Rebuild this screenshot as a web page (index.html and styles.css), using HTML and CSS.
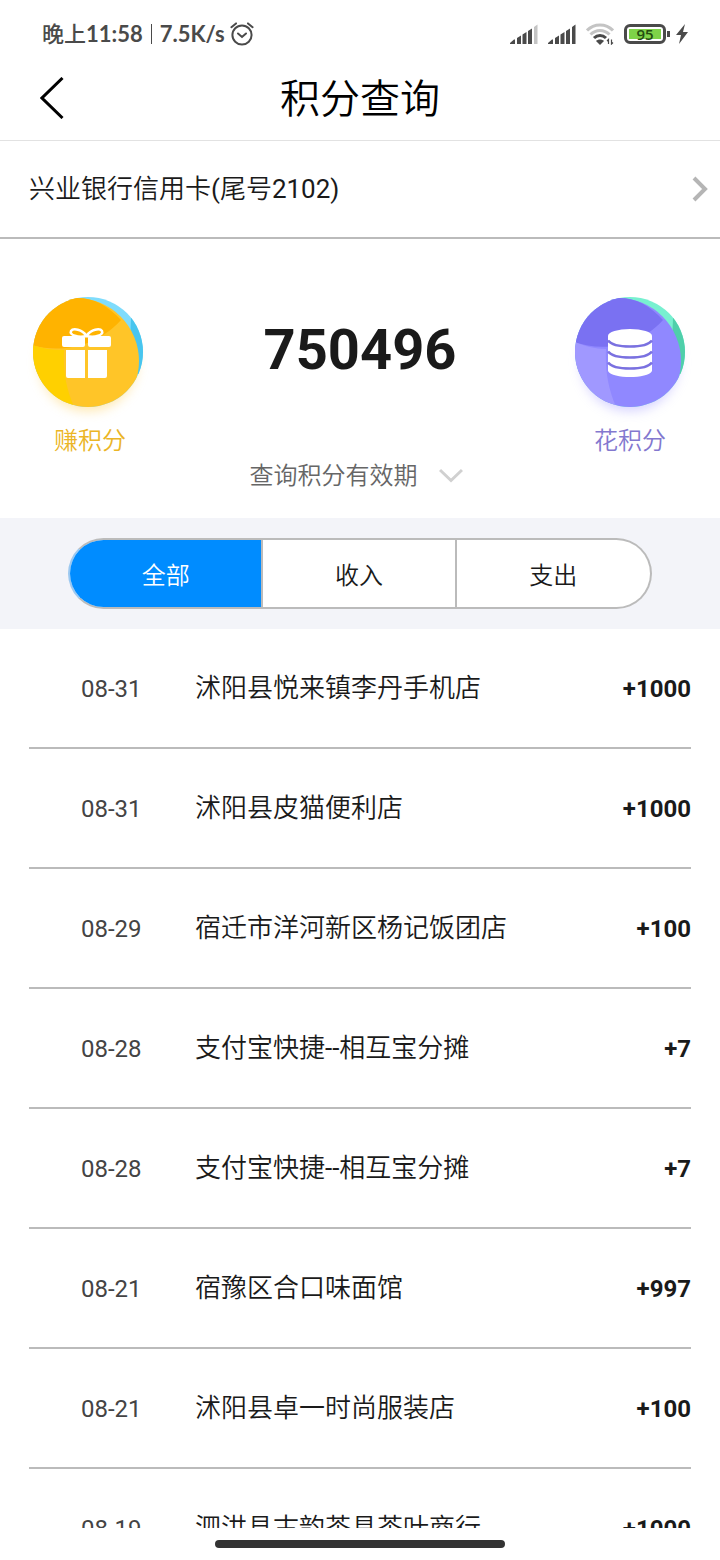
FILE: index.html
```html
<!DOCTYPE html>
<html lang="zh-CN">
<head>
	<meta charset="utf-8">
	<meta name="viewport" content="width=device-width, initial-scale=1">
	<title>积分查询</title>
	<link rel="stylesheet" href="styles.css">
</head>
<body>
	<div class="status">
		<span class="time"><span class="period">晚上</span>11:58</span>
		<span class="sep"></span>
		<span class="speed">7.5K/s</span>
		<svg class="alarm" width="24" height="24" viewBox="0 0 24 24" fill="none" stroke="#4a4a4a" stroke-width="2" stroke-linecap="round">
			<circle cx="12" cy="13" r="9.6"/>
			<path d="M8 11.5l4 3.500 4-3.500M1.400 5.200L6 1.400M22.600 5.200L18 1.400"/>
		</svg>
		<div class="status-icons">
			<svg width="28" height="20" viewBox="0 0 28 20" fill="#4a4a4a">
				<path d="M0 20v-1l4-3.500h1V20zM7 14l4-2.500V20H7zM12.500 10.500l4-2.500v12h-4zM18 7l4-2.500V20h-4z"/>
				<path d="M24 3l3.500-2.500V20H24z" fill="#c4c4c4"/>
			</svg>
			<svg width="28" height="20" viewBox="0 0 28 20" fill="#4a4a4a">
				<path d="M0 20v-1l4-3.500h1V20zM7 14l4-2.500V20H7zM12.500 10.500l4-2.500v12h-4zM18 7l4-2.500V20h-4zM24 3l3.500-2.500V20H24z"/>
			</svg>
			<svg width="28" height="22" viewBox="0 0 28 22" fill="none" stroke="#c4c4c4" stroke-width="3">
				<path d="M1 7.500C8 0 20 0 27 7.500M4.500 11.500c5.500-5.500 13.500-5.500 19 0"/>
				<path d="M8 15c3.500-3.500 8.500-3.500 12 0" stroke="#4a4a4a"/>
				<path d="M10 18c2-2 6-2 8 0L14 22z" fill="#4a4a4a" stroke="none"/>
				<path d="M22.500 21v-4.500l-1.500 1.500M25.500 16.500V21l1.500-1.500" stroke="#4a4a4a" stroke-width="1.200"/>
			</svg>
			<span class="battery"><span class="level">95</span></span>
			<svg class="bolt" width="12" height="20" viewBox="0 0 12 20" fill="#4a4a4a">
				<path d="M9 0L0 11h5L3 20l9-12H7z"/>
			</svg>
		</div>
	</div>

	<header class="header">
		<button class="back" aria-label="返回">
			<svg width="24" height="42" viewBox="0 0 24 42" fill="none" stroke="#000" stroke-width="3">
				<path d="M22.500 1L2 21l20.500 20"/>
			</svg>
		</button>
		<h1>积分查询</h1>
	</header>

	<a class="card" href="#">
		<span>兴业银行信用卡(尾号2102)</span>
		<svg width="16" height="26" viewBox="0 0 16 26" fill="none" stroke="#b5b5b5" stroke-width="4">
			<path d="M2 2l11 11L2 24"/>
		</svg>
	</a>

	<section class="points">
		<a class="entry earn" href="#">
			<svg width="150" height="140" viewBox="2 0 150 140">
				<defs>
					<clipPath id="disc1"><circle cx="75" cy="60" r="55"/></clipPath>
					<filter id="blur" x="-30%" y="-30%" width="160%" height="160%"><feGaussianBlur stdDeviation="6"/></filter>
				</defs>
				<circle cx="75" cy="70" r="49" fill="#ffd97a" opacity=".6" filter="url(#blur)"/>
				<g clip-path="url(#disc1)">
					<path d="M20 5h110v110H20z" fill="#7fdcfc"/>
					<path d="M118 26l14-4v60h-16z" fill="#48c5ee"/>
					<circle cx="63" cy="69" r="63" fill="#ffc528"/>
					<path d="M10 50c20 9 65 14 98-22C95 14 82 6 64 6L10 0z" fill="#ffb300"/>
					<path d="M10 49c12 6 26 9 41 9-1 21 2 40 12 61H10z" fill="#ffd000"/>
				</g>
				<g fill="#fff">
					<rect x="49" y="44" width="23" height="11" rx="2"/>
					<rect x="75" y="44" width="23" height="11" rx="2"/>
					<path d="M53 58h19v28H55q-2 0-2-2zM75 58h19v26q0 2-2 2H75z"/>
				</g>
				<path d="M73.500 44C69 37 60 36 58 39c-2 4 7 7 15.500 5C78 37 87 36 89 39c2 4-7 7-15.500 5z" fill="none" stroke="#fff" stroke-width="2.500"/>
			</svg>
			<span>赚积分</span>
		</a>

		<div class="total">
			<strong>750496</strong>
			<button class="expiry">查询积分有效期
				<svg width="24" height="16" viewBox="0 0 24 16" fill="none" stroke="#d0d0d0" stroke-width="3">
					<path d="M1 2l11 10.500L23 2"/>
				</svg>
			</button>
		</div>

		<a class="entry spend" href="#">
			<svg width="150" height="140" viewBox="0 0 150 140">
				<defs>
					<clipPath id="disc2"><circle cx="75" cy="60" r="55"/></clipPath>
				</defs>
				<circle cx="75" cy="70" r="49" fill="#b9b4ff" opacity=".6" filter="url(#blur)"/>
				<g clip-path="url(#disc2)">
					<path d="M20 5h110v110H20z" fill="#78f0d0"/>
					<path d="M118 26l14-4v60h-16z" fill="#4fcfaa"/>
					<circle cx="63" cy="69" r="63" fill="#9088ff"/>
					<path d="M10 46c20 11 65 18 98-18C95 14 82 6 64 6L10 0z" fill="#7a71f2"/>
					<path d="M10 45c12 7 26 12 41 12-1 21 2 41 12 62H10z" fill="#a098ff"/>
				</g>
				<path d="M53 44v35c4 8 40 8 44 0V44z" fill="#fff"/>
				<ellipse cx="75" cy="44" rx="22" ry="7" fill="#fff"/>
				<path d="M53 48.500c6 8 38 8 44 0M53 59.500c6 8 38 8 44 0M53 70.500c6 8 38 8 44 0" fill="none" stroke="#7a71e0" stroke-width="2.500"/>
			</svg>
			<span>花积分</span>
		</a>
	</section>

	<nav class="filter">
		<div class="tabs">
			<button class="tab active">全部</button>
			<button class="tab">收入</button>
			<button class="tab">支出</button>
		</div>
	</nav>

	<main class="list">
		<table>
			<tr><td class="date">08-31</td><td class="shop">沭阳县悦来镇李丹手机店</td><td class="amount">+1000</td></tr>
			<tr><td class="date">08-31</td><td class="shop">沭阳县皮猫便利店</td><td class="amount">+1000</td></tr>
			<tr><td class="date">08-29</td><td class="shop">宿迁市洋河新区杨记饭团店</td><td class="amount">+100</td></tr>
			<tr><td class="date">08-28</td><td class="shop">支付宝快捷--相互宝分摊</td><td class="amount">+7</td></tr>
			<tr><td class="date">08-28</td><td class="shop">支付宝快捷--相互宝分摊</td><td class="amount">+7</td></tr>
			<tr><td class="date">08-21</td><td class="shop">宿豫区合口味面馆</td><td class="amount">+997</td></tr>
			<tr><td class="date">08-21</td><td class="shop">沭阳县卓一时尚服装店</td><td class="amount">+100</td></tr>
			<tr><td class="date">08-19</td><td class="shop">泗洪县古韵茶具茶叶商行</td><td class="amount">+1000</td></tr>
		</table>
	</main>

	<div class="home"><span></span></div>
</body>
</html>
```

FILE: styles.css
```css
*{box-sizing:border-box}
body{
	display:flex;
	flex-direction:column;
	height:100vh;
	margin:0;
	overflow:hidden;
	background:#fff;
	color:#1a1a1a;
	font-family:Roboto, "Noto Sans CJK SC DemiLight", "Noto Sans CJK SC", sans-serif;
	font-size:24px;
}
body > *{flex:none}
a{color:inherit;text-decoration:none}
button{
	padding:0;
	border:0;
	background:none;
	color:inherit;
	font:inherit;
	cursor:pointer;
}
svg{display:block}

/* status bar */
.status{
	display:flex;
	align-items:center;
	height:56px;
	padding:12px 32px 0 42px;
	color:#4a4a4a;
	font-family:Lato, "Noto Sans CJK SC", sans-serif;
	font-size:22px;
	font-weight:700;
	line-height:32px;
}
.period{font-weight:500}
.sep{
	width:1px;
	height:20px;
	margin:0 8px;
	background:#4a4a4a;
}
.alarm{margin-left:5px}
.status-icons{
	display:flex;
	align-items:center;
	gap:10px;
	margin-left:auto;
}
.battery{
	position:relative;
	width:42px;
	height:20px;
	padding:2px;
	border:3px solid #4a4a4a;
	border-radius:6px;
}
.battery::after{
	content:"";
	position:absolute;
	top:4px;
	right:-7px;
	width:3px;
	height:6px;
	background:#4a4a4a;
}
.level{
	display:block;
	height:10px;
	background:#7ed348;
	color:#234d10;
	font:600 15px/10px "Open Sans", sans-serif;
	text-align:center;
}

/* title */
.header{
	display:grid;
	grid-template-columns:100px 1fr 100px;
	align-items:center;
	height:85px;
	border-bottom:1px solid #e2e2e2;
	color:#000;
}
.back{padding-left:40px}
.header h1{
	margin:0;
	padding-top:4px;
	font-size:40px;
	font-weight:400;
	line-height:56px;
	text-align:center;
}

.card{
	display:flex;
	align-items:center;
	justify-content:space-between;
	height:98px;
	padding:0 12px 0 29px;
	border-bottom:2px solid #bbb;
	font-size:26px;
}
.card span{padding-bottom:5px}

/* points */
.points{
	display:grid;
	grid-template-columns:1fr 2fr 1fr;
	height:279px;
	padding-top:53px;
}
.entry{
	display:flex;
	flex-direction:column;
	align-items:center;
	line-height:36px;
}
.entry span{margin-top:-9px}
.earn{color:#ebb526}
.spend{color:#8378cf}
.total{
	display:flex;
	flex-direction:column;
	align-items:center;
	padding-top:26px;
}
.total strong{
	font-size:56px;
	line-height:64px;
}
.expiry{
	display:flex;
	align-items:center;
	gap:21px;
	margin-top:76px;
	padding-right:8px;
	color:#666;
	line-height:36px;
}

/* filter */
.filter{
	padding:20px 68px;
	background:#f3f4f9;
}
.tabs{
	display:grid;
	grid-template-columns:repeat(3, 1fr);
	height:71px;
	overflow:hidden;
	border:2px solid #bbb;
	border-radius:36px;
	background:#fff;
}
.tab{border-right:2px solid #bbb}
.tab:last-child{border-right:0}
.tab.active{
	background:#008cff;
	color:#fff;
}
.tabs:has(.active:first-child){border-left-color:#9cc8f0}

/* records */
.list{
	flex:1 1 0;
	min-height:0;
	overflow:hidden;
	padding:0 29px;
}
.list table{
	width:100%;
	border-spacing:0;
}
.list td{
	height:120px;
	padding:2px 0 0;
	border-bottom:2px solid #bbb;
}
.list .date{
	width:166px;
	padding-left:52px;
	color:#444;
}
.list .shop{
	padding:0 0 5px;
	font-size:26px;
}
.list .amount{
	font-weight:700;
	text-align:right;
}

.home{
	height:32px;
	padding-top:12px;
	background:#fff;
}
.home span{
	display:block;
	width:290px;
	height:8px;
	margin:0 auto;
	border-radius:4px;
	background:#333;
}
```
